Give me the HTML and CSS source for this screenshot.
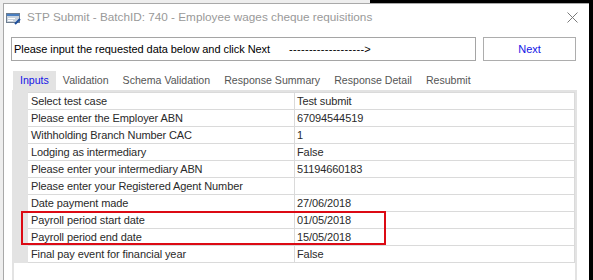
FILE: index.html
```html
<!DOCTYPE html>
<html lang="en">
<head>
    <meta charset="UTF-8">
    <title>STP Submit</title>
    <link rel="stylesheet" href="styles.css">
</head>
<body>
    <div class="window">
        <div class="titlebar">
            <svg class="app-icon" width="15" height="13" viewBox="0 0 15 13">
                <rect x="0.5" y="1.5" width="13" height="9" fill="#c9d3de" stroke="#6d7d90"/>
                <rect x="1" y="2" width="12" height="2" fill="#4a7fc1"/>
                <rect x="2" y="6" width="7" height="1" fill="#ffffff"/>
                <rect x="2" y="8" width="5" height="1" fill="#ffffff"/>
                <path d="M9 12 L14 7" stroke="#1d4f9c" stroke-width="2"/>
            </svg>
            <span class="title">STP Submit - BatchID: 740 - Employee wages cheque requisitions</span>
            <svg class="close" width="11" height="11" viewBox="0 0 11 11">
                <path d="M0.5 0.5 L10.5 10.5 M10.5 0.5 L0.5 10.5" stroke="#7a7a7a" stroke-width="1"/>
            </svg>
        </div>

        <div class="toolbar">
            <div class="prompt">Please input the requested data below and click Next<span class="arrow">-------------------&gt;</span></div>
            <button class="next-btn">Next</button>
        </div>

        <div class="tabs">
            <div class="tab active">Inputs</div>
            <div class="tab">Validation</div>
            <div class="tab">Schema Validation</div>
            <div class="tab">Response Summary</div>
            <div class="tab">Response Detail</div>
            <div class="tab">Resubmit</div>
        </div>

        <div class="panel">
            <div class="row"><div class="rh"></div><div class="c1">Select test case</div><div class="c2">Test submit</div></div>
            <div class="row"><div class="rh"></div><div class="c1">Please enter the Employer ABN</div><div class="c2">67094544519</div></div>
            <div class="row"><div class="rh"></div><div class="c1">Withholding Branch Number CAC</div><div class="c2">1</div></div>
            <div class="row"><div class="rh"></div><div class="c1">Lodging as intermediary</div><div class="c2">False</div></div>
            <div class="row"><div class="rh"></div><div class="c1">Please enter your intermediary ABN</div><div class="c2">51194660183</div></div>
            <div class="row"><div class="rh"></div><div class="c1">Please enter your Registered Agent Number</div><div class="c2"></div></div>
            <div class="row"><div class="rh"></div><div class="c1">Date payment made</div><div class="c2">27/06/2018</div></div>
            <div class="row"><div class="rh"></div><div class="c1">Payroll period start date</div><div class="c2">01/05/2018</div></div>
            <div class="row"><div class="rh"></div><div class="c1">Payroll period end date</div><div class="c2">15/05/2018</div></div>
            <div class="row last"><div class="rh"></div><div class="c1">Final pay event for financial year</div><div class="c2">False</div></div>
            <div class="highlight"></div>
        </div>
    </div>
</body>
</html>
```

FILE: styles.css
```css
body {
    margin: 0;
    height: 280px;
    overflow: hidden;
    font-family: "Liberation Sans", Arial, sans-serif;
    background: linear-gradient(to right, #eeeeee 370px, #000000 370px);
}

.window {
    margin: 3px 0 0 3px;
    width: 585px;
    height: 276px;
    background-color: white;
    border-top: 1px solid #a9a9a9;
    border-left: 1px solid #a9a9a9;
}

.titlebar {
    display: flex;
    align-items: center;
    height: 25px;
}

.app-icon {
    margin-left: 2px;
    margin-top: 3px;
}

.title {
    margin-left: 6px;
    font-size: 11.75px;
    color: #999999;
}

.close {
    margin-left: auto;
    margin-right: 11px;
    margin-top: 1px;
}

.toolbar {
    display: flex;
    gap: 7px;
    margin-top: 8px;
    padding-left: 7px;
    height: 24px;
}

.prompt {
    box-sizing: border-box;
    width: 465px;
    height: 24px;
    border: 1px solid #a5a5a5;
    padding-left: 2px;
    font-size: 11px;
    line-height: 22px;
    letter-spacing: -0.05px;
    color: black;
    white-space: nowrap;
}

.arrow {
    margin-left: 19px;
    letter-spacing: 0.3px;
}

.next-btn {
    box-sizing: border-box;
    width: 93px;
    height: 24px;
    border: 1px solid #adadad;
    background-color: white;
    font-family: "Liberation Sans", Arial, sans-serif;
    font-size: 11px;
    color: #1414e6;
    padding: 0;
}

.tabs {
    display: flex;
    margin-top: 10px;
    margin-left: 9px;
    height: 19px;
}

.tab {
    padding: 0 7px;
    font-size: 10.6px;
    line-height: 19px;
    color: #555555;
}

.tab.active {
    background-color: #e3e3e3;
    color: #1414e6;
}

.panel {
    position: relative;
    margin-left: 8px;
    width: 561px;
    height: 188px;
    border: 2px solid #e3e3e3;
    border-bottom: none;
    font-size: 11px;
    letter-spacing: -0.1px;
    color: #2a2a2a;
}

.row {
    display: flex;
    height: 17px;
}

.rh {
    width: 14px;
    background-color: #e3e3e3;
}

.c1,
.c2 {
    box-sizing: border-box;
    border-top: 1px solid #dadada;
    line-height: 16px;
    white-space: nowrap;
}

.c1 {
    width: 267px;
    padding-left: 3px;
    border-right: 1px solid #dadada;
}

.c2 {
    flex: 1;
    padding-left: 2px;
    border-right: 1px solid #dadada;
}

.row.last {
    height: 18px;
}

.row.last .c1,
.row.last .c2 {
    border-bottom: 1px solid #dadada;
}

.highlight {
    position: absolute;
    left: 7px;
    top: 119px;
    width: 361px;
    height: 30px;
    border: 2px solid #dc0a14;
}
```
